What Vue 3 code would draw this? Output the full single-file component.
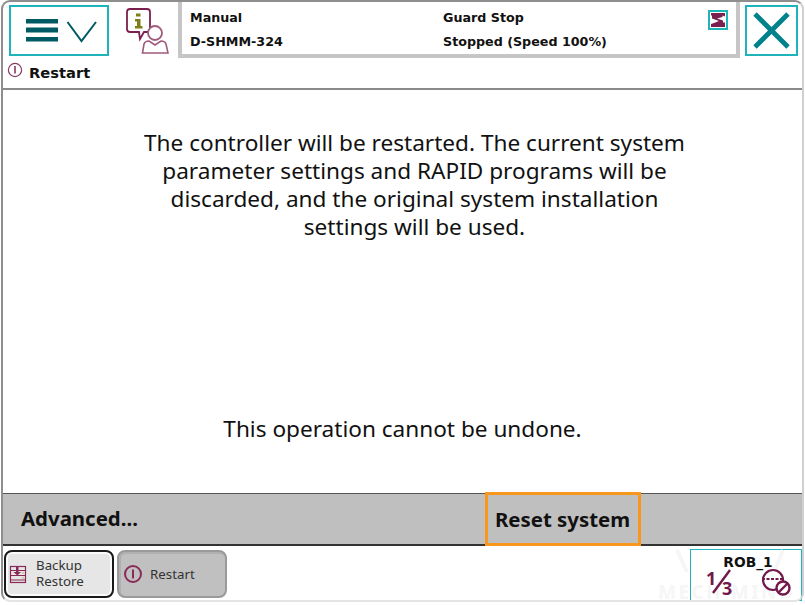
<script setup>
const paragraph = [
  'The controller will be restarted. The current system',
  'parameter settings and RAPID programs will be',
  'discarded, and the original system installation',
  'settings will be used.'
]
</script>

<template>
  <div class="screen">
    <header class="top">
      <button class="menu-btn">
        <svg width="95" height="47" viewBox="0 0 95 47">
          <g fill="#005a64">
            <rect x="14" y="12" width="32" height="4.500" />
            <rect x="14" y="20.500" width="32" height="5" />
            <rect x="14" y="30" width="32" height="4.500" />
          </g>
          <path d="M55.500 15 L69.500 34 L84 15" fill="none" stroke="#005a64" stroke-width="2" />
        </svg>
      </button>
      <div class="info-icon">
        <svg width="48" height="50" viewBox="0 0 48 50">
          <path d="M4 4 H21 Q24 4 24 7 V24 Q24 27 21 27 H18 L14 34 L13 27 H4 Q1 27 1 24 V7 Q1 4 4 4 Z" fill="#fff" stroke="#7a1f4e" stroke-width="1.800" />
          <path d="M10 8.500 h4.500 v3 h-4.500 z M9 14 h5.500 v7 h2 v2.500 h-7.500 v-2.500 h2 v-4.500 h-2 z" fill="#7f7f1a" />
          <circle cx="29" cy="28" r="7" fill="#fff" stroke="#a05a7c" stroke-width="1.800" />
          <path d="M16.500 48 L18 39 Q19 36 23 36 L29 40 L35 36 Q39 36 40 39 L42 48 Z" fill="#fff" stroke="#a05a7c" stroke-width="1.600" />
        </svg>
      </div>
      <div class="status">
        <div class="status-col first">
          <span>Manual</span>
          <span>D-SHMM-324</span>
        </div>
        <div class="status-col second">
          <span>Guard Stop</span>
          <span>Stopped (Speed 100%)</span>
        </div>
        <div class="speed-icon">
          <svg width="16" height="16" viewBox="0 0 16 16">
            <path d="M1 1 H15 V4.500 L12.500 3.500 V5 L7 6.500 L13 8.500 V10.500 H15 V15 H1 V12 L4 11 L9 9 L2 6.500 V3.500 L1 3.500 Z" fill="#7a1f4e" />
          </svg>
        </div>
      </div>
      <button class="close-btn">
        <svg width="48" height="48" viewBox="0 0 48 48">
          <path d="M7 7 L40 40 M40 7 L7 40" stroke="#00828c" stroke-width="4.800" fill="none" />
        </svg>
      </button>
    </header>

    <div class="title">
      <svg width="16" height="16" viewBox="0 0 16 16">
        <circle cx="8" cy="8" r="6.600" fill="none" stroke="#8a3a63" stroke-width="1.200" />
        <rect x="7.200" y="4" width="1.600" height="7.500" fill="#8a3a63" />
      </svg>
      <span>Restart</span>
    </div>

    <main class="content">
      <p class="message">
        <span v-for="line in paragraph" :key="line">{{ line }}</span>
      </p>
      <p class="warning">This operation cannot be undone.</p>
    </main>

    <div class="actions">
      <button class="action advanced">Advanced...</button>
      <button class="action reset">Reset system</button>
    </div>

    <footer class="bottom">
      <button class="task active">
        <svg width="18" height="19" viewBox="0 0 18 19">
          <g fill="none" stroke="#8a2a58" stroke-width="1.200">
            <rect x="1.500" y="1.500" width="15" height="16" />
            <path d="M1.500 5.500 H16.500 M1.500 10.500 H16.500 M1.500 15 H16.500" />
          </g>
          <path d="M7 1 h2.500 v6 h2.500 l-3.700 3.500 l-3.800 -3.500 h2.500 z" fill="#8a2a58" />
          <path d="M13 8 h2 M13 13 h2" stroke="#b9b25c" stroke-width="1.200" />
        </svg>
        <span class="two">Backup<br />Restore</span>
      </button>
      <button class="task current">
        <svg width="20" height="20" viewBox="0 0 20 20">
          <circle cx="10" cy="10" r="8" fill="none" stroke="#8a2a58" stroke-width="2" />
          <rect x="9" y="5.500" width="2" height="9" fill="#8a2a58" />
        </svg>
        <span>Restart</span>
      </button>
      <div class="watermark">MECH MIND</div>
      <div class="robot">
        <span class="rob-name">ROB_1</span>
        <span class="digit one">1</span>
        <span class="digit three">3</span>
        <svg class="rob-svg" width="110" height="50" viewBox="0 0 110 50">
          <path d="M-14 0 L-4 22 M92 0 L84 20" stroke="#f6f6f6" stroke-width="4" fill="none" />
          <path d="M39 20 L22 43" stroke="#73184a" stroke-width="2.400" fill="none" />
          <g fill="none" stroke="#73184a">
            <circle cx="82" cy="30" r="10" stroke-width="2.200" />
            <path d="M71 29 H92" stroke-width="2" stroke-dasharray="3 1.500" />
            <circle cx="92" cy="38" r="6.500" fill="#fff" stroke-width="2.400" />
            <path d="M88 42 L96 34" stroke-width="2.400" />
          </g>
        </svg>
      </div>
    </footer>
  </div>
</template>

<style scoped>
.screen {
  width: 805px;
  height: 605px;
  box-sizing: border-box;
  padding: 0 2px 3px 2px;
  display: flex;
  flex-direction: column;
  background: #fff;
  font-family: "Noto Sans", sans-serif;
  color: #111;
  position: relative;
  overflow: hidden;
}
.screen::before {
  content: "";
  position: absolute;
  inset: 0 1px 3px 1px;
  border: 2px solid #8e8e8e;
  border-bottom-color: #e4e4e4;
  border-right-color: #d0d0d0;
  border-radius: 9px;
  pointer-events: none;
  z-index: 3;
}
button {
  font: inherit;
  color: inherit;
  margin: 0;
  padding: 0;
  cursor: pointer;
}
.top {
  height: 57px;
  display: flex;
  align-items: flex-start;
  flex: none;
}
.menu-btn {
  width: 100px;
  height: 51px;
  margin: 5px 0 0 7px;
  border: 2px solid #1fb4bc;
  background: #fff;
  box-sizing: border-box;
  display: flex;
  align-items: center;
  justify-content: center;
}
.info-icon {
  width: 48px;
  height: 54px;
  margin: 5px 0 0 17px;
}
.status {
  width: 562px;
  height: 58px;
  margin-left: 4px;
  box-sizing: border-box;
  border: 4px solid #c6c6c6;
  border-top-width: 2px;
  display: flex;
  position: relative;
  font-family: "DejaVu Sans", sans-serif;
  font-size: 12.700px;
  font-weight: 700;
  z-index: 1;
}
.status-col {
  display: flex;
  flex-direction: column;
  gap: 9px;
  padding-top: 8px;
  line-height: 15px;
}
.first { width: 252px; padding-left: 8px; }
.second { padding-left: 1px; }
.speed-icon {
  position: absolute;
  top: 8px;
  right: 8px;
  width: 20px;
  height: 20px;
  box-sizing: border-box;
  border: 2px solid #1fb4bc;
  display: flex;
  align-items: center;
  justify-content: center;
}
.close-btn {
  width: 53px;
  height: 51px;
  margin: 5px 0 0 5px;
  border: 2px solid #1fb4bc;
  background: #fff;
  box-sizing: border-box;
  display: flex;
  align-items: center;
  justify-content: center;
}
.title {
  height: 33px;
  flex: none;
  display: flex;
  align-items: center;
  gap: 6px;
  padding-left: 5px;
  box-sizing: border-box;
  border-bottom: 2px solid #8a8a8a;
  font-family: "DejaVu Sans", sans-serif;
  font-size: 14.700px;
  font-weight: 700;
}
.title svg { margin-top: -5px; }
.content {
  flex: 1;
  display: flex;
  flex-direction: column;
  align-items: center;
  font-size: 22.600px;
  line-height: 28px;
  min-height: 0;
}
.message {
  margin: 39px 0 0;
  padding-left: 24px;
  display: flex;
  flex-direction: column;
  align-items: center;
}
.warning { margin: 174px 0 0; }
.actions {
  height: 53px;
  flex: none;
  display: flex;
  background: #bfbfbf;
  border-top: 1px solid #555;
  border-bottom: 2px solid #333;
  box-sizing: border-box;
  position: relative;
}
.action {
  background: transparent;
  border: 0;
  font-size: 20.400px;
  font-weight: 700;
}
.advanced {
  width: 483px;
  text-align: left;
  padding: 0 0 2px 19px;
}
.reset {
  position: absolute;
  left: 483px;
  top: -2px;
  width: 156px;
  height: 54px;
  padding-right: 1px;
  border: 3px solid #f7981d;
  box-sizing: border-box;
}
.bottom {
  height: 56px;
  flex: none;
  display: flex;
  align-items: flex-start;
  position: relative;
  padding: 4px 0 0 2px;
  gap: 3px;
  box-sizing: border-box;
}
.task {
  width: 110px;
  height: 48px;
  box-sizing: border-box;
  display: flex;
  align-items: center;
  border-radius: 8px;
  font-size: 13.300px;
  line-height: 16px;
  text-align: left;
  color: #333;
}
.active {
  background: #e6e6e6;
  border: 2px solid #1a1a1a;
  box-shadow: inset 0 0 0 2px #fafafa;
  padding-left: 3px;
  gap: 9px;
}
.two { padding-bottom: 2px; }
.current {
  background: #c0c0c0;
  border: 2px solid #9a9a9a;
  box-shadow: inset 1px 1px 0 1px #b0b0b0;
  padding-left: 4px;
  gap: 7px;
}
.watermark {
  position: absolute;
  left: 656px;
  bottom: 1px;
  font-size: 19px;
  letter-spacing: 2.500px;
  line-height: 18px;
  font-weight: 700;
  color: #f6f6f6;
}
.robot {
  position: absolute;
  left: 688px;
  top: 3px;
  width: 112px;
  height: 52px;
  border: 1px solid #1fb4bc;
  box-sizing: border-box;
  display: flex;
  flex-direction: column;
  align-items: center;
}
.rob-name {
  font-family: "DejaVu Sans", sans-serif;
  font-size: 13.800px;
  font-weight: 700;
  line-height: 15px;
  margin: 5px 0 0 4px;
}
.rob-svg {
  position: absolute;
  left: 0;
  top: 0;
  overflow: visible;
}
.digit {
  position: absolute;
  font-size: 18px;
  font-weight: 700;
  line-height: 13px;
  color: #73184a;
}
.one { left: 15px; top: 22px; }
.three { left: 31px; top: 32px; }
</style>
